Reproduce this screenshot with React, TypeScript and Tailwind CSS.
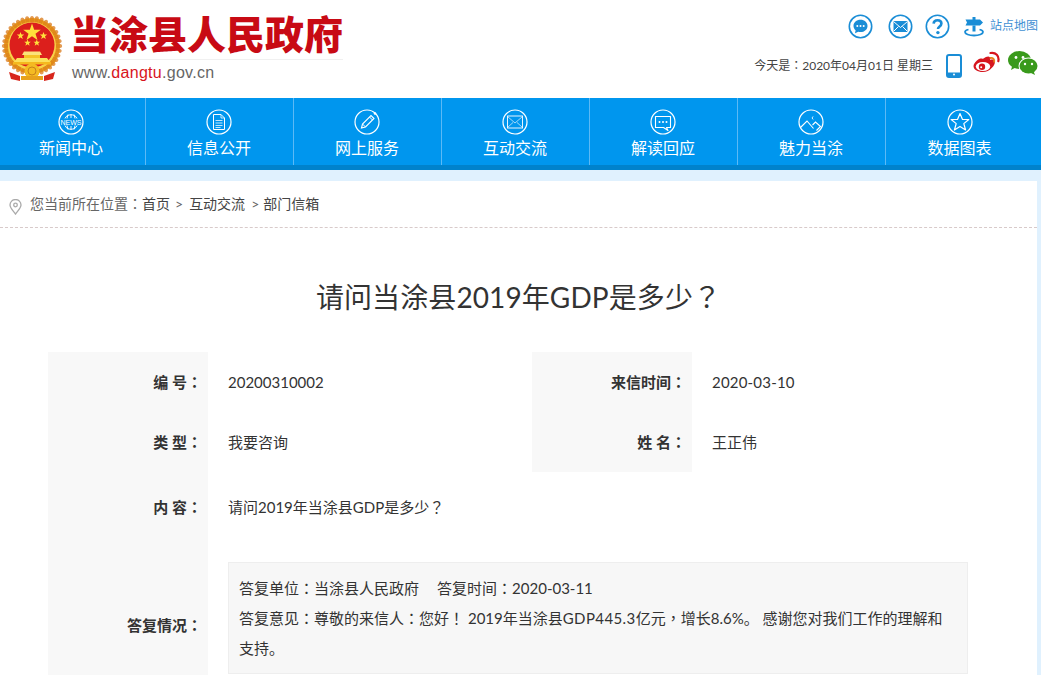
import type { ReactNode } from 'react'

const cjk = "font-['Lato','Noto_Sans_CJK_SC',sans-serif]"

// SC puts the colon in the corner of its cell, the reference has it centred
function Punct({ c }: { c: string }) {
  return <span className="font-['Noto_Sans_CJK_TC',sans-serif]">{c}</span>
}

function Emblem() {
  const ticks = Array.from({ length: 36 }, (_, i) => i * 10)
  return (
    <svg width="66" height="70" viewBox="0 14 66 70" className="shrink-0">
      <circle cx="32" cy="46" r="28" fill="#f2b21c" />
      {ticks.map((a) => (
        <ellipse key={a} cx="32" cy="19.5" rx="2.2" ry="3.6" fill="#d9791a" opacity="0.75" transform={`rotate(${a} 32 46)`} />
      ))}
      <circle cx="32" cy="46" r="24" fill="#f8d24a" />
      <circle cx="32" cy="45" r="22.5" fill="#dc1f1c" />
      <polygon points="32,23.5 34.2,29.8 40.8,29.8 35.5,33.7 37.5,40 32,36.2 26.5,40 28.5,33.7 23.2,29.8 29.8,29.8" fill="#ffe13b" />
      <polygon points="20.5,32 21.5,34.6 24.2,34.6 22,36.3 22.8,39 20.5,37.4 18.2,39 19,36.3 16.8,34.6 19.5,34.6" fill="#ffe13b" />
      <polygon points="43.5,32 44.5,34.6 47.2,34.6 45,36.3 45.8,39 43.5,37.4 41.2,39 42,36.3 39.8,34.6 42.5,34.6" fill="#ffe13b" />
      <polygon points="27.5,39.5 28.4,41.8 30.8,41.8 28.9,43.3 29.6,45.7 27.5,44.3 25.4,45.7 26.1,43.3 24.2,41.8 26.6,41.8" fill="#ffe13b" />
      <polygon points="36.8,39.5 37.7,41.8 40.1,41.8 38.2,43.3 38.9,45.7 36.8,44.3 34.7,45.7 35.4,43.3 33.5,41.8 35.9,41.8" fill="#ffe13b" />
      <polygon points="24,51.5 40,51.5 42,55 22,55" fill="#fbe27a" />
      <rect x="24" y="55" width="16" height="3" fill="#f5c326" />
      <polygon points="14,62 50,62 47,58 17,58" fill="#fbe05a" />
      <rect x="13" y="62" width="38" height="2.5" fill="#f5b81e" />
      <circle cx="32" cy="71" r="7.5" fill="#f4bb22" />
      <circle cx="32" cy="71" r="4" fill="none" stroke="#c9811b" strokeWidth="1" />
      <path d="M9 72 L20 76 L20 81 L11 79 Z" fill="#d8261c" />
      <path d="M55 72 L44 76 L44 81 L53 79 Z" fill="#d8261c" />
      <rect x="21" y="76" width="22" height="4" fill="#e8a21c" />
    </svg>
  )
}

function ChatCircle() {
  return (
    <svg width="25" height="25" viewBox="0 0 25 25">
      <circle cx="12.5" cy="12.5" r="11.2" fill="none" stroke="#1a8dd6" strokeWidth="1.6" />
      <path d="M12.5 5.8c4 0 7 2.7 7 6.1s-3 6.1-7 6.1c-.8 0-1.5-.1-2.2-.3L7 19.2l.6-3c-1.3-1.1-2.1-2.6-2.1-4.3 0-3.4 3-6.1 7-6.1z" fill="#1a8dd6" />
      <circle cx="9.3" cy="12" r="1" fill="#fff" />
      <circle cx="12.5" cy="12" r="1" fill="#fff" />
      <circle cx="15.7" cy="12" r="1" fill="#fff" />
    </svg>
  )
}

function MailCircle() {
  return (
    <svg width="25" height="25" viewBox="0 0 25 25">
      <circle cx="12.5" cy="12.5" r="11.2" fill="none" stroke="#1a8dd6" strokeWidth="1.6" />
      <rect x="5.5" y="7" width="14" height="11" fill="#1a8dd6" />
      <path d="M5.5 7.5l7 6 7-6M5.5 17.5l5-5M19.5 17.5l-5-5" fill="none" stroke="#fff" strokeWidth="1" />
    </svg>
  )
}

function HelpCircle() {
  return (
    <svg width="25" height="25" viewBox="0 0 25 25">
      <circle cx="12.5" cy="12.5" r="11.2" fill="none" stroke="#1a8dd6" strokeWidth="1.6" />
      <path d="M8.6 9.6c.2-2.2 1.8-3.4 3.9-3.4 2.2 0 3.9 1.3 3.9 3.3 0 2.9-3.4 2.9-3.4 5.5" fill="none" stroke="#1a8dd6" strokeWidth="2.6" />
      <circle cx="12.9" cy="18.6" r="1.7" fill="#1a8dd6" />
    </svg>
  )
}

function SitemapSign() {
  return (
    <svg width="20" height="20" viewBox="0 0 20 20">
      <rect x="8.5" y="0" width="3" height="3" fill="#1a8dd6" />
      <path d="M1.5 2.5h14.5l3 3-3 3H1.5l1.5-3z" fill="#1a8dd6" />
      <rect x="8.5" y="8.5" width="3" height="6" fill="#1a8dd6" />
      <path d="M4.5 12.5C2.5 13 1 13.8 1 15c0 2 4 3.5 9 3.5s9-1.500 9-3.500c0-1.200-1.500-2-3.500-2.500" fill="none" stroke="#1a8dd6" strokeWidth="1.8" />
    </svg>
  )
}

function Phone() {
  return (
    <svg width="16" height="24" viewBox="0 0 16 24">
      <rect x="1" y="1" width="14" height="22" rx="2" fill="none" stroke="#1a8dd6" strokeWidth="2" />
      <rect x="1" y="18.5" width="14" height="4" fill="#1a8dd6" />
      <circle cx="8" cy="20.5" r="1" fill="#fff" />
    </svg>
  )
}

function Weibo() {
  return (
    <svg width="27" height="23" viewBox="0 0 27 23">
      <path d="M10.5 7.5c2.600-2.100 5.400-2.600 6.400-1.200.5.800.4 1.800.1 2.700 2-.8 4.500-.6 4.900 1.400.5 3.500-5 10.600-12 10.600C4.500 21 .5 18.500.5 15c0-2.300 2.500-5 5-6.800 2-1.400 3.500-.1 5-.7z" fill="#d6161e" />
      <ellipse cx="10" cy="15.5" rx="7.2" ry="4.6" fill="#fff" />
      <circle cx="9" cy="15.7" r="3.2" fill="#d6161e" />
      <circle cx="8.2" cy="16.3" r="1" fill="#fff" />
      <path d="M17.5 7c2.600-.5 4.300 1.400 3.700 3.800" fill="none" stroke="#e8811a" strokeWidth="1.8" strokeLinecap="round" />
      <path d="M17.5 2c5.300-1 9 3.200 7.800 8.200" fill="none" stroke="#d6161e" strokeWidth="2.2" strokeLinecap="round" />
    </svg>
  )
}

function Wechat() {
  return (
    <svg width="30" height="24" viewBox="0 0 30 24">
      <ellipse cx="11.5" cy="9" rx="11.5" ry="9" fill="#3a9a1c" />
      <path d="M4.5 14l-1.5 5 5.500-3z" fill="#3a9a1c" />
      <circle cx="8" cy="6.5" r="1.4" fill="#fff" />
      <circle cx="15" cy="6.5" r="1.4" fill="#fff" />
      <ellipse cx="20.5" cy="15" rx="10" ry="8.5" fill="#fff" />
      <ellipse cx="20.5" cy="15" rx="9" ry="7.5" fill="#3a9a1c" />
      <path d="M25.5 20l1.500 4-5-2.500z" fill="#3a9a1c" />
      <circle cx="17" cy="13" r="1.2" fill="#fff" />
      <circle cx="24" cy="13" r="1.2" fill="#fff" />
    </svg>
  )
}

function NavIcon({ children }: { children: ReactNode }) {
  return (
    <svg width="26" height="26" viewBox="0 0 26 26" fill="none" stroke="#fff">
      <circle cx="13" cy="13" r="12" strokeWidth="1.2" />
      {children}
    </svg>
  )
}

const navItems: { label: string; icon: ReactNode }[] = [
  {
    label: '新闻中心',
    icon: (
      <>
        <path d="M7 9.5c1.500-5 10.500-5 12 0M7 16.500c1.500 5 10.500 5 12 0M13 5v4M13 17v4M10 5.500l-1 4M16 5.500l1 4M10 20.500l-1-4M16 20.500l1-4" strokeWidth="1" opacity="0.9" />
        <text x="13" y="15.5" textAnchor="middle" fontSize="7" fontFamily="Liberation Sans, sans-serif" fill="#fff" stroke="none">NEWS</text>
      </>
    ),
  },
  {
    label: '信息公开',
    icon: (
      <>
        <path d="M7.5 5.500h7.500l3.500 3.500v11.500h-11z" strokeWidth="1" />
        <path d="M15 5.500v3.500h3.500M9.500 11.500h7M9.500 14h7M9.500 16.500h7M9.500 18.500h5" strokeWidth="0.9" opacity="0.85" />
      </>
    ),
  },
  {
    label: '网上服务',
    icon: (
      <>
        <path d="M7.5 19l1-4L17 6.500l3 3L11.500 18z" strokeWidth="1.1" />
        <path d="M8.5 15l3 3M15.500 8l3 3" strokeWidth="1" />
        <circle cx="21" cy="4.5" r="1.3" fill="#fff" stroke="none" />
      </>
    ),
  },
  {
    label: '互动交流',
    icon: (
      <>
        <rect x="5.5" y="7" width="15" height="12" strokeWidth="1" opacity="0.9" />
        <path d="M5.5 7.500l7.500 6.500 7.500-6.500M5.500 18.500l5.500-5M20.500 18.500l-5.500-5" strokeWidth="0.8" opacity="0.8" />
      </>
    ),
  },
  {
    label: '解读回应',
    icon: (
      <>
        <path d="M5.5 7.500h15v11h-4l1.500 3-4.500-3h-8z" strokeWidth="1.1" strokeLinejoin="round" />
        <circle cx="9.5" cy="13" r="1" fill="#fff" stroke="none" />
        <circle cx="13" cy="13" r="1" fill="#fff" stroke="none" />
        <circle cx="16.5" cy="13" r="1" fill="#fff" stroke="none" />
      </>
    ),
  },
  {
    label: '魅力当涂',
    icon: (
      <>
        <path d="M2.5 18.500L9 12l6.500 7.500M14.500 16l3-3 5 4.500-4 4" strokeWidth="1.1" />
        <path d="M15 7.5c-1 .8-1 2.400.3 3" strokeWidth="1" />
      </>
    ),
  },
  {
    label: '数据图表',
    icon: <path d="M13 4.5l2.500 6h6.300l-5 4.100 1.800 6.400-5.600-3.600L7.400 21l1.800-6.400-5-4.100h6.300z" strokeWidth="1.2" strokeLinejoin="round" />,
  },
]

function Row({ label, children, className = '' }: { label: ReactNode; children: ReactNode; className?: string }) {
  return (
    <div className={`flex items-center ${className}`}>
      <div className="h-full w-[160px] shrink-0 bg-[#f8f8f8] pr-[6px] flex items-center justify-end font-bold text-[#333]">
        <span className="whitespace-pre">{label}</span>
      </div>
      <div className="pl-5 flex-1 min-w-0">{children}</div>
    </div>
  )
}

export default function App() {
  return (
    <div className={`h-[675px] overflow-hidden bg-[#e0f1fe] ${cjk} text-[15px] text-[#333]`}>
      {/* Header */}
      <header className="h-[98px] bg-white flex justify-between">
        <div className="flex pt-[14px]">
          <Emblem />
          <div className="ml-[5px] w-[272px]">
            <div className="h-[46px] border-b border-[#f0f0f0] -ml-px text-[39px] leading-[41px] font-black text-[#c80a14] whitespace-nowrap">
              当涂县人民政府
            </div>
            <div className="mt-[1px] ml-px font-['Liberation_Sans',sans-serif] text-[16px] leading-[24px] tracking-[0.28px] text-[#666]">
              www.<span className="text-[#d8141c]">dangtu</span>.gov.cn
            </div>
          </div>
        </div>
        <div className="w-[300px] pr-[3px] flex flex-col items-end">
          <div className="flex items-center h-[26px] mt-[13px]">
            <ChatCircle />
            <span className="ml-[15px]"><MailCircle /></span>
            <span className="ml-[12px]"><HelpCircle /></span>
            <span className="ml-[14px] mt-[2px]"><SitemapSign /></span>
            <span className="ml-[6px] text-[12px] text-[#3f8fd3]">站点地图</span>
          </div>
          <div className="flex items-center mt-[12px] h-[28px]">
            <span className="text-[12px] text-[#444]">
              今天是<Punct c="：" />2020年04月01日 星期三
            </span>
            <span className="ml-[13px] mt-[2px]"><Phone /></span>
            <span className="ml-[11px] -mt-[5px]"><Weibo /></span>
            <span className="ml-[8px] -mt-[4px]"><Wechat /></span>
          </div>
        </div>
      </header>

      {/* Nav */}
      <nav className="h-[72px] bg-[#0096ee] border-b-[5px] border-[#0082cc] overflow-hidden">
        <ul className="flex -ml-[2px] w-[1036px]">
          {navItems.map((item, i) => (
            <li
              key={item.label}
              className={`w-[148px] h-[67px] flex flex-col items-center pt-[11px] pr-px text-white ${i < navItems.length - 1 ? 'border-r border-[#5cb9f5]' : ''}`}
            >
              <NavIcon>{item.icon}</NavIcon>
              <span className="text-[16px] leading-[24px] mt-[1px]">{item.label}</span>
            </li>
          ))}
        </ul>
      </nav>

      {/* Content */}
      <main className="mt-[11px] w-[1037px] bg-white h-[600px]">
        <div className="h-[47px] border-b border-dashed border-[#d8caca] flex items-center pl-[9px] text-[14px] text-[#666]">
          <svg width="13" height="16" viewBox="0 0 13 16" className="mt-[5px]" fill="none" stroke="#aaa" strokeWidth="1.3">
            <path d="M6.5 15C3.500 11 1 8.800 1 6a5.500 5.500 0 0 1 11 0c0 2.800-2.500 5-5.500 9z" />
            <circle cx="6.5" cy="6" r="1.8" />
          </svg>
          <span className="ml-[8px] -mt-[1px] flex items-center whitespace-nowrap">
            <span>您当前所在位置<Punct c="：" /></span>
            <span className="text-[#444]">首页</span>
            <span className="ml-[5px] mr-[6px]">&gt;</span>
            <span className="text-[#444]">互动交流</span>
            <span className="ml-[6px] mr-[4px]">&gt;</span>
            <span className="text-[#444]">部门信箱</span>
          </span>
        </div>

        <h1 className="text-center text-[28px] leading-[40px] mt-[48px] tracking-[0.1px] text-[#333]">
          请问当涂县2019年GDP是多少<Punct c="？" />
        </h1>

        <div className="mt-[35px] ml-[48px] w-[920px]">
          <div className="flex h-[60px]">
            <Row label={<>编 号<Punct c="：" /></>} className="w-[484px]">20200310002</Row>
            <Row label={<>来信时间<Punct c="：" /></>} className="flex-1"><span className="tracking-[0.2px]">2020-03-10</span></Row>
          </div>
          <div className="flex h-[60px]">
            <Row label={<>类 型<Punct c="：" /></>} className="w-[484px]">我要咨询</Row>
            <Row label={<>姓 名<Punct c="：" /></>} className="flex-1">王正伟</Row>
          </div>
          <Row label={<>内 容<Punct c="：" /></>} className="h-[70px]">
            请问2019年当涂县GDP是多少<Punct c="？" />
          </Row>
          <Row label={<>答复情况<Punct c="：" /></>} className="h-[166px]">
            <div className="-mt-[14px] border border-[#eee] bg-[#f7f7f7] px-[10px] py-[10px] leading-[30px]">
              <p>
                答复单位<Punct c="：" />当涂县人民政府<span className="ml-[18px]">答复时间<Punct c="：" />2020-03-11</span>
              </p>
              <p>
                答复意见<Punct c="：" />尊敬的来信人<Punct c="：" />您好<Punct c="！" /> 2019年当涂县<span className="tracking-[0.4px]">GDP445.3</span>亿元<Punct c="，" />增长8.6%。 感谢您对我们工作的理解和<br />支持。
              </p>
            </div>
          </Row>
        </div>
      </main>
    </div>
  )
}
